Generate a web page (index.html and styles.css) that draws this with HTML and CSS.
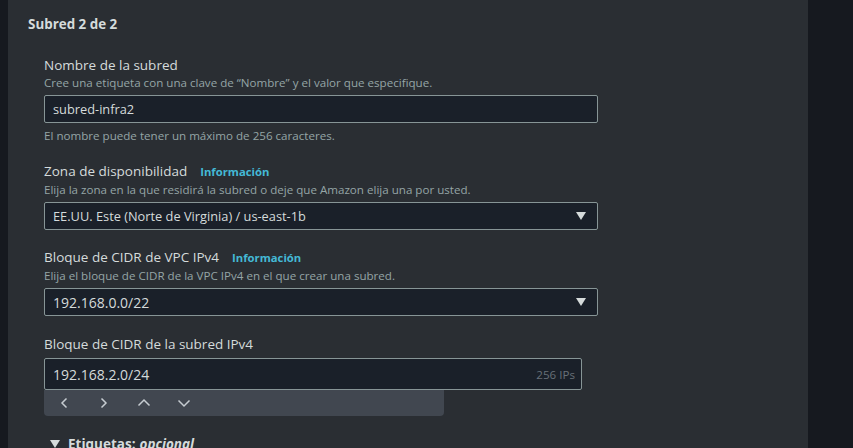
FILE: index.html
```html
<!DOCTYPE html>
<html lang="es">
<head>
<meta charset="utf-8">
<title>Subred</title>
<link rel="stylesheet" href="styles.css">
</head>
<body>
<div class="page">
  <section class="panel">
    <h2 class="heading">Subred 2 de 2</h2>
    <div class="fields">
      <div class="field first">
        <div class="label">Nombre de la subred</div>
        <div class="desc">Cree una etiqueta con una clave de “Nombre” y el valor que especifique.</div>
        <div class="input">subred-infra2</div>
        <div class="desc constraint">El nombre puede tener un máximo de 256 caracteres.</div>
      </div>
      <div class="field">
        <div class="label">Zona de disponibilidad<span class="info">Información</span></div>
        <div class="desc">Elija la zona en la que residirá la subred o deje que Amazon elija una por usted.</div>
        <div class="input select">EE.UU. Este (Norte de Virginia) / us-east-1b<span class="caret"></span></div>
      </div>
      <div class="field">
        <div class="label">Bloque de CIDR de VPC IPv4<span class="info">Información</span></div>
        <div class="desc">Elija el bloque de CIDR de la VPC IPv4 en el que crear una subred.</div>
        <div class="input select"><span class="num">192.168.0.0/22</span><span class="caret"></span></div>
      </div>
      <div class="field wide-gap">
        <div class="label">Bloque de CIDR de la subred IPv4</div>
        <div class="input cidr"><span class="num">192.168.2.0/24</span><span class="count">256 IPs</span></div>
        <div class="stepper">
          <span class="step"><svg viewBox="0 0 14 14" width="14" height="14"><path d="M9.5 2.5 5 7l4.5 4.5"/></svg></span>
          <span class="step"><svg viewBox="0 0 14 14" width="14" height="14"><path d="M4.5 2.5 9 7l-4.5 4.5"/></svg></span>
          <span class="step"><svg viewBox="0 0 14 14" width="14" height="14"><path d="M1.5 9.5 7 4l5.5 5.5"/></svg></span>
          <span class="step"><svg viewBox="0 0 14 14" width="14" height="14"><path d="M1.5 4.5 7 10l5.5-5.5"/></svg></span>
        </div>
      </div>
      <div class="tags"><span class="tri"></span>Etiquetas: <em>opcional</em></div>
    </div>
  </section>
</div>
</body>
</html>
```
FILE: styles.css
```css
* { box-sizing: border-box; }
html, body { margin: 0; height: 100%; }
body {
  background: #16191f;
  font-family: "Open Sans", "Noto Sans", sans-serif;
  color: #d5dbdb;
  overflow: hidden;
}
.page {
  display: flex;
  padding-left: 8px;
  height: 448px;
}
.panel {
  width: 800px;
  background: #2a2e33;
  padding: 14px 20px 0;
}
.heading {
  margin: 0;
  font-size: 13.4px;
  line-height: 20px;
  font-weight: 700;
  color: #d5dbdb;
}
.fields {
  padding-left: 16px;
  display: flex;
  flex-direction: column;
}
.field { display: flex; flex-direction: column; margin-top: 17px; }
.field.first { margin-top: 21px; }
.field.wide-gap { margin-top: 18px; }
.label {
  font-size: 13.5px;
  line-height: 20px;
  color: #d5dbdb;
}
.info {
  font-size: 11.3px;
  font-weight: 700;
  color: #44b9d6;
  margin-left: 13px;
}
.desc {
  font-size: 11.6px;
  line-height: 16px;
  color: #95a5a6;
}
.constraint { margin-top: 5px; }
.input {
  margin-top: 4px;
  width: 554px;
  height: 28px;
  border: 1px solid #879596;
  background: #1a2029;
  border-radius: 2px;
  padding: 0 8px;
  display: flex;
  align-items: center;
  font-size: 12.8px;
  color: #d5dbdb;
}
.num { font-size: 14px; }
.select { justify-content: space-between; padding-right: 11px; }
.caret {
  width: 0; height: 0;
  border-left: 5px solid transparent;
  border-right: 5px solid transparent;
  border-top: 8px solid #d5dbdb;
}
.cidr {
  width: 538px;
  height: 32px;
  margin-top: 4px;
  justify-content: space-between;
  padding-right: 6px;
}
.count { font-size: 11.6px; color: #687078; }
.stepper {
  width: 400px;
  height: 26px;
  background: #414750;
  border-radius: 0 0 4px 4px;
  display: flex;
  align-items: center;
  padding-left: 13px;
  gap: 26px;
}
.step { display: flex; width: 14px; height: 14px; }
.step svg { fill: none; stroke: #c6ccd1; stroke-width: 1.5; }
.tags {
  margin-top: 18px;
  font-size: 13.5px;
  line-height: 20px;
  font-weight: 700;
  color: #d5dbdb;
  padding-left: 6px;
  display: flex;
  align-items: center;
}
.tags em { margin-left: 4px; }
.tri {
  width: 0; height: 0;
  border-left: 5px solid transparent;
  border-right: 5px solid transparent;
  border-top: 8px solid #d5dbdb;
  margin-right: 8px;
}
```
